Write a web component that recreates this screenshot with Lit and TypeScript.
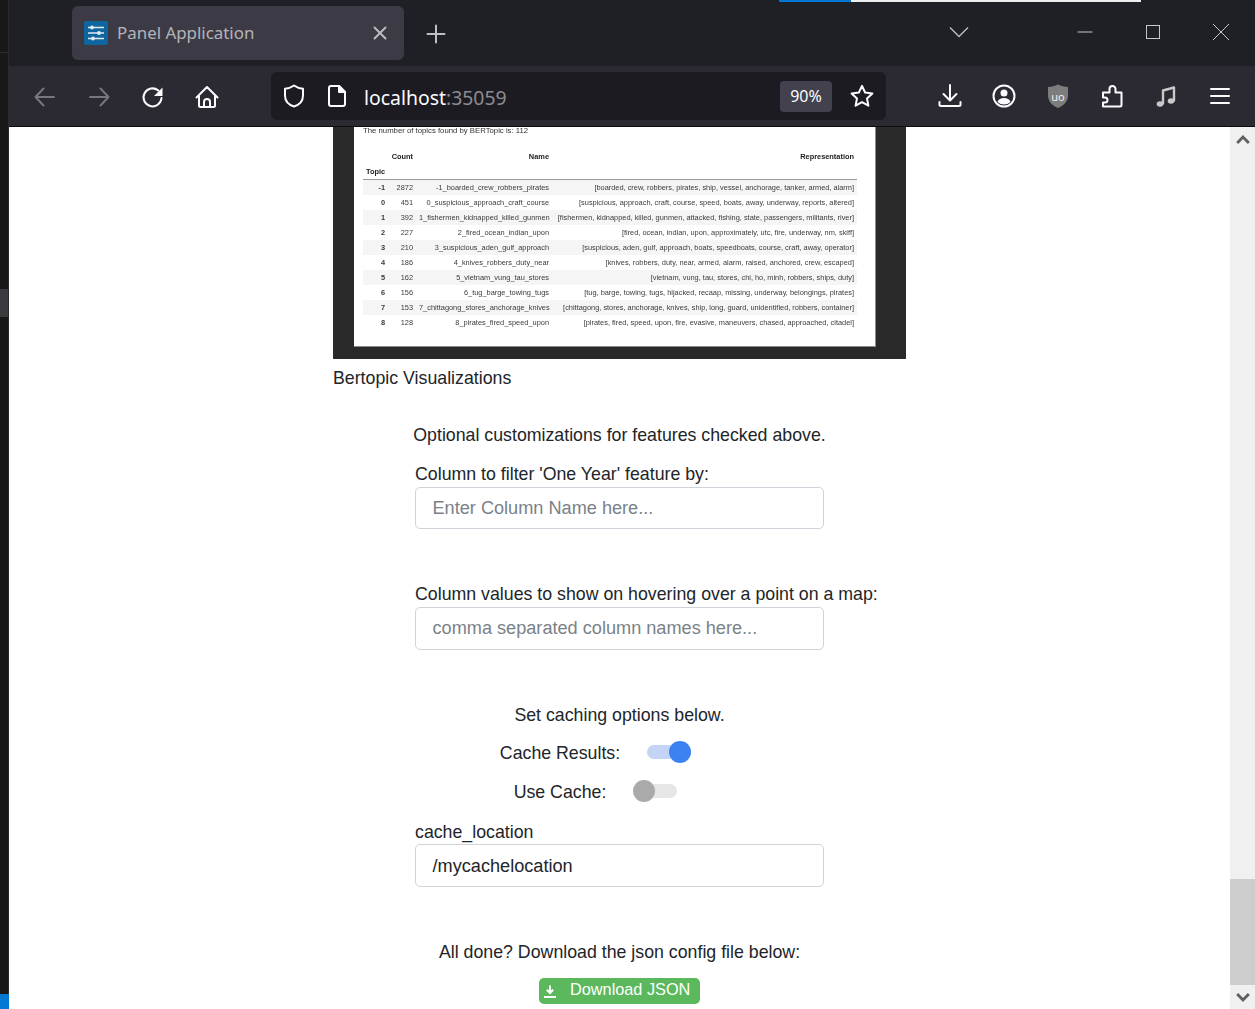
import { LitElement, html, css, svg } from 'lit';
import { customElement } from 'lit/decorators.js';

const rows = [
  ['-1', '2872', '-1_boarded_crew_robbers_pirates', '[boarded, crew, robbers, pirates, ship, vessel, anchorage, tanker, armed, alarm]'],
  ['0', '451', '0_suspicious_approach_craft_course', '[suspicious, approach, craft, course, speed, boats, away, underway, reports, altered]'],
  ['1', '392', '1_fishermen_kidnapped_killed_gunmen', '[fishermen, kidnapped, killed, gunmen, attacked, fishing, state, passengers, militants, river]'],
  ['2', '227', '2_fired_ocean_indian_upon', '[fired, ocean, indian, upon, approximately, utc, fire, underway, nm, skiff]'],
  ['3', '210', '3_suspicious_aden_gulf_approach', '[suspicious, aden, gulf, approach, boats, speedboats, course, craft, away, operator]'],
  ['4', '186', '4_knives_robbers_duty_near', '[knives, robbers, duty, near, armed, alarm, raised, anchored, crew, escaped]'],
  ['5', '162', '5_vietnam_vung_tau_stores', '[vietnam, vung, tau, stores, chi, ho, minh, robbers, ships, duty]'],
  ['6', '156', '6_tug_barge_towing_tugs', '[tug, barge, towing, tugs, hijacked, recaap, missing, underway, belongings, pirates]'],
  ['7', '153', '7_chittagong_stores_anchorage_knives', '[chittagong, stores, anchorage, knives, ship, long, guard, unidentified, robbers, container]'],
  ['8', '128', '8_pirates_fired_speed_upon', '[pirates, fired, speed, upon, fire, evasive, maneuvers, chased, approached, citadel]'],
];

const icon = (body: unknown, cls = '') =>
  html`<svg class="ico ${cls}" viewBox="0 0 24 24" width="24" height="24" fill="none" stroke="currentColor" stroke-width="2" stroke-linecap="round" stroke-linejoin="round">${body}</svg>`;

const icons = {
  back: svg`<path d="M21 12H3M10.500 3.500 2.500 12l8 8.500" />`,
  forward: svg`<path d="M3 12h18M13.500 3.500l8 8.500-8 8.500" />`,
  reload: svg`<path d="M20.500 13a9 9 0 1 1-3.200-7.500" /><path d="M21.500 2.500v8.500H13z" fill="currentColor" stroke="none" />`,
  home: svg`<path d="M1.500 12.500 12 2l10.500 10.500M4 10v10.500A1.500 1.500 0 0 0 5.500 22h13a1.500 1.500 0 0 0 1.500-1.500V10M9 22v-5a3 3 0 0 1 6 0v5" />`,
  shield: svg`<path d="M12 1.500c2.500 1.800 5.500 3 9 3.200v6.800c0 5.200-3.700 9.300-9 11-5.300-1.700-9-5.800-9-11V4.700c3.500-.2 6.500-1.400 9-3.200z" />`,
  page: svg`<path d="M4 4a2 2 0 0 1 2-2h8l6 6v12a2 2 0 0 1-2 2H6a2 2 0 0 1-2-2z" /><path d="M14 2v6h6z" fill="currentColor" />`,
  star: svg`<path d="M12 1.800l3.100 6.700 7.300.9-5.400 5 1.400 7.300-6.400-3.600-6.400 3.600 1.400-7.300-5.400-5 7.300-.9z" />`,
  download: svg`<path d="M12 1v15M5.500 10l6.500 6.500 6.500-6.500M1.500 18v2.500A1.500 1.500 0 0 0 3 22h18a1.500 1.500 0 0 0 1.500-1.500V18" />`,
  account: svg`<circle cx="12" cy="12" r="10.500" /><circle cx="12" cy="9" r="3.500" fill="currentColor" stroke="none" /><path d="M5.500 18c1-3 3.500-4 6.500-4s5.500 1 6.500 4a9.500 9.500 0 0 1-13 0z" fill="currentColor" stroke="none" />`,
  puzzle: svg`<path d="M3 22.500h17a1.500 1.500 0 0 0 1.500-1.500V8.500h-6V5a3 3 0 0 0-6 0v3.500H3v5h2a2.500 2.500 0 0 1 0 5H3z" />`,
  music: svg`<path d="M9 19.500V6.500L20 3.500v13" stroke-width="2.400" /><ellipse cx="6" cy="20" rx="3.300" ry="2.800" fill="currentColor" stroke="none" /><ellipse cx="17" cy="17" rx="3.300" ry="2.800" fill="currentColor" stroke="none" />`,
  menu: svg`<path d="M3 5h18M3 12h18M3 19h18" />`,
  plus: svg`<path d="M12 3.500v17M3.500 12h17" />`,
  close: svg`<path d="M6.500 6.500l11 11M17.500 6.500l-11 11" />`,
  chevron: svg`<path d="M3 7.500l9 9 9-9" />`,
  minimize: svg`<path d="M4.500 12h15" />`,
  maximize: svg`<rect x="5.500" y="5.500" width="13" height="13" />`,
  winclose: svg`<path d="M4 4l16 16M20 4 4 20" />`,
  up: svg`<path d="M5 15.500l7-7 7 7" />`,
  down: svg`<path d="M5 8.500l7 7 7-7" />`,
};

@customElement('app-root')
export class AppRoot extends LitElement {
  static override styles = css`
    :host {
      display: flex;
      height: 1009px;
      overflow: hidden;
      font-family: 'Liberation Sans', Arial, sans-serif;
      color: #212529;
    }
    .strip {
      width: 8px;
      flex: none;
      display: flex;
      flex-direction: column;
      background: #181818;
      border-right: 1px solid #2b2b2b;
    }
    .strip .top { height: 52px; border-bottom: 1px solid #2b2b2b; }
    .strip .gap { height: 236px; }
    .strip .patch { height: 28px; background: #3a3a3f; }
    .strip .blue { margin-top: auto; height: 15px; background: #0078d4; margin-right: -1px; }
    .main { flex: 1; display: flex; flex-direction: column; min-width: 0; }
    .ico { display: block; flex: none; }

    .tabbar {
      position: relative;
      height: 66px;
      flex: none;
      display: flex;
      background: #1f1f26;
      color: #c8c8cc;
      padding-left: 63px;
    }
    .progress {
      position: absolute;
      top: 0;
      left: 770px;
      width: 362px;
      height: 2px;
      background: linear-gradient(to right, #0078d4 72px, #eeeeee 72px);
    }
    .tab {
      width: 332px;
      height: 54px;
      margin-top: 6px;
      box-sizing: border-box;
      padding: 0 12px;
      display: flex;
      align-items: center;
      background: #3c3b45;
      border-radius: 6px;
    }
    .favicon {
      width: 24px;
      height: 24px;
      flex: none;
      background: #0f659e;
      border-radius: 2px;
      color: #dfe9f1;
    }
    .tab-title {
      margin-left: 9px;
      margin-bottom: 2px;
      flex: 1;
      font-family: 'Noto Sans', sans-serif;
      font-size: 16.900px;
      color: #b4b3b9;
      white-space: nowrap;
    }
    .tab .ico { color: #b9b9be; }
    .slot {
      width: 54px;
      height: 60px;
      flex: none;
      display: flex;
      align-items: center;
      justify-content: center;
    }
    .tabbar .slot { height: 64px; }
    .tabbar .plus { width: 64px; height: 68px; color: #c0c0c4; }
    .chev { margin-left: auto; margin-right: 65px; color: #b8b8bc; }
    .chev .ico { stroke-width: 1.500; stroke-linecap: butt; }
    .win { width: 68px; color: #c8c8cc; }
    .win .ico { stroke-width: 1; stroke-linecap: butt; stroke-linejoin: miter; }

    .toolbar {
      height: 60px;
      flex: none;
      box-sizing: border-box;
      display: flex;
      align-items: center;
      padding-left: 9px;
      background: #2b2a33;
      color: #fbfbfe;
    }
    .nav { padding-top: 2px; box-sizing: border-box; }
    .dim { color: #77767c; }
    .urlbar {
      width: 615px;
      height: 48px;
      margin: 0 37px;
      flex: none;
      box-sizing: border-box;
      padding: 0 12px 0 11px;
      display: flex;
      align-items: center;
      background: #1c1b22;
      border-radius: 6px;
    }
    .urlbar .page { margin-left: 19px; }
    .url {
      margin-left: 15px;
      flex: 1;
      font-family: 'Noto Sans', sans-serif;
      font-size: 19.400px;
      padding-top: 2px;
    }
    .url span { color: #8b8b90; }
    .zoom {
      width: 52px;
      height: 31px;
      display: flex;
      align-items: center;
      justify-content: center;
      background: #42414d;
      border-radius: 4px;
      font-family: 'Noto Sans', sans-serif;
      font-size: 16px;
    }
    .urlbar .star { margin-left: 18px; }
    .music { color: #c9c9c9; }
    .ublock { position: relative; width: 24px; height: 24px; }
    .ublock b {
      position: absolute;
      inset: 0;
      display: flex;
      align-items: center;
      justify-content: center;
      font: 400 11px 'Noto Sans', sans-serif;
      color: #eeeeee;
    }

    .rule { height: 1px; flex: none; background: #0c0c0d; }
    .viewport { height: 882px; flex: none; display: flex; background: #fff; overflow: hidden; }
    .content { flex: 1; min-width: 0; }

    .frame {
      width: 573px;
      margin: 0 auto;
      box-sizing: border-box;
      padding: 0 30px 12px 21px;
      background: #2a2a2a;
    }
    .panel {
      height: 220px;
      box-sizing: border-box;
      padding-left: 9px;
      background: #fff;
      border-right: 1px solid #8a8a8a;
      border-bottom: 1px solid #8a8a8a;
      filter: blur(0.3px);
      color: #333;
    }
    .panel p {
      margin: 0 0 14.500px;
      font-size: 7.760px;
      line-height: 7px;
    }
    table {
      width: 494px;
      table-layout: fixed;
      border-collapse: collapse;
      font-size: 7.400px;
    }
    th, td {
      box-sizing: border-box;
      height: 15px;
      padding: 0 3px;
      text-align: right;
      white-space: nowrap;
      overflow: hidden;
    }
    th { color: #222; }
    tbody th, tbody td { color: #3a3a3a; }
    thead tr:last-child th { height: 16px; text-align: left; border-bottom: 1.500px solid #999; }
    tbody tr:nth-child(odd) { background: #f5f5f5; }
    .c1 { width: 25px; }
    .c2 { width: 28px; }
    .c3 { width: 136px; }

    .form {
      width: 573px;
      margin: 0 auto;
      font-size: 17.750px;
      line-height: 22px;
    }
    .caption { margin-top: 8px; }
    .center { text-align: center; }
    .field { width: 409px; margin: 0 auto; white-space: nowrap; }
    .input {
      height: 42px;
      box-sizing: border-box;
      padding: 0 16.500px;
      display: flex;
      align-items: center;
      border: 1px solid #ced4da;
      border-radius: 5px;
      color: #7a8288;
      font-size: 18.150px;
      margin-top: 2px;
    }
    .input.tall { height: 43px; padding-bottom: 1px; }
    .input.filled { color: #212529; margin-top: 1px; padding-bottom: 0; }
    .switch-row {
      display: flex;
      justify-content: center;
      align-items: center;
      gap: 27px;
      padding-right: 47px;
      height: 22px;
    }
    .switch { position: relative; width: 45px; height: 22px; flex: none; margin-bottom: 2px; }
    .switch i {
      position: absolute;
      left: 0;
      right: 1px;
      top: 4px;
      height: 14px;
      border-radius: 7px;
      background: #e6e6e6;
    }
    .switch u {
      position: absolute;
      left: 0;
      top: 0;
      width: 22px;
      height: 22px;
      border-radius: 50%;
      background: #aaaaaa;
    }
    .switch.on i { background: #c3d4f6; }
    .switch.on u { left: 22px; background: #3b82f0; }
    .mt16 { margin-top: 16px; }
    .mt17 { margin-top: 17px; }
    .mt18 { margin-top: 18px; }
    .mt35 { margin-top: 35px; }
    .mt54 { margin-top: 54px; }
    .btn-wrap { display: flex; justify-content: center; margin-top: 15px; }
    .btn {
      width: 161px;
      height: 26px;
      box-sizing: border-box;
      padding-left: 3px;
      display: flex;
      align-items: center;
      gap: 12px;
      background: #5cb85c;
      border-radius: 5px;
      color: #fff;
      font-size: 16.300px;
    }
    .btn span { padding-bottom: 5px; }

    .scrollbar {
      width: 25px;
      flex: none;
      display: flex;
      flex-direction: column;
      background: #f0f0f0;
      color: #606060;
    }
    .arrow { height: 25px; flex: none; display: flex; align-items: center; justify-content: center; }
    .arrow .ico { stroke-width: 3.500; width: 20px; height: 20px; stroke-linecap: butt; stroke-linejoin: miter; }
    .thumb { margin-top: auto; height: 106px; flex: none; background: #cdcdcd; }
    .arrow.bottom { height: 24px; }
  `;

  override render() {
    return html`
      <div class="strip">
        <div class="top"></div>
        <div class="gap"></div>
        <div class="patch"></div>
        <div class="blue"></div>
      </div>
      <div class="main">
        <div class="tabbar">
          <div class="progress"></div>
          <div class="tab">
            <div class="favicon">
              <svg viewBox="0 0 24 24" width="24" height="24" fill="none" stroke="currentColor" stroke-width="1.500">
                <path d="M4 6.500h16M4 12h16M4 17.500h16" />
                <circle cx="8" cy="6.500" r="1.200" fill="currentColor" />
                <circle cx="15" cy="12" r="1.200" fill="currentColor" />
                <circle cx="9" cy="17.500" r="1.200" fill="currentColor" />
              </svg>
            </div>
            <span class="tab-title">Panel Application</span>
            ${icon(icons.close)}
          </div>
          <div class="slot plus">${icon(icons.plus)}</div>
          <div class="slot chev">${icon(icons.chevron)}</div>
          <div class="slot win">${icon(icons.minimize)}</div>
          <div class="slot win">${icon(icons.maximize)}</div>
          <div class="slot win">${icon(icons.winclose)}</div>
        </div>

        <div class="toolbar">
          <div class="slot nav dim">${icon(icons.back)}</div>
          <div class="slot nav dim">${icon(icons.forward)}</div>
          <div class="slot nav">${icon(icons.reload)}</div>
          <div class="slot nav">${icon(icons.home)}</div>
          <div class="urlbar">
            ${icon(icons.shield)}
            ${icon(icons.page, 'page')}
            <div class="url">localhost<span>:35059</span></div>
            <div class="zoom">90%</div>
            ${icon(icons.star, 'star')}
          </div>
          <div class="slot">${icon(icons.download)}</div>
          <div class="slot">${icon(icons.account)}</div>
          <div class="slot">
            <div class="ublock">
              <svg class="ico" viewBox="0 0 24 24" width="24" height="24">
                <path d="M12 0.500c3 1.500 6.500 2.300 10 2.500v8.500c0 5.500-4 10-10 12.500-6-2.500-10-7-10-12.500V3c3.500-.2 7-1 10-2.500z" fill="#7d7d7d" />
              </svg>
              <b>uo</b>
            </div>
          </div>
          <div class="slot">${icon(icons.puzzle)}</div>
          <div class="slot music">${icon(icons.music)}</div>
          <div class="slot">${icon(icons.menu)}</div>
        </div>
        <div class="rule"></div>

        <div class="viewport">
          <div class="content">
            <div class="frame">
              <div class="panel">
                <p>The number of topics found by BERTopic is: 112</p>
                <table>
                  <thead>
                    <tr>
                      <th class="c1"></th>
                      <th class="c2">Count</th>
                      <th class="c3">Name</th>
                      <th>Representation</th>
                    </tr>
                    <tr><th>Topic</th><th></th><th></th><th></th></tr>
                  </thead>
                  <tbody>
                    ${rows.map(
                      (r) => html`<tr><th>${r[0]}</th><td>${r[1]}</td><td>${r[2]}</td><td>${r[3]}</td></tr>`
                    )}
                  </tbody>
                </table>
              </div>
            </div>

            <div class="form">
              <div class="caption">Bertopic Visualizations</div>
              <div class="center mt35">Optional customizations for features checked above.</div>
              <div class="field mt17">
                <div>Column to filter 'One Year' feature by:</div>
                <div class="input">Enter Column Name here...</div>
              </div>
              <div class="field mt54">
                <div>Column values to show on hovering over a point on a map:</div>
                <div class="input tall">comma separated column names here...</div>
              </div>
              <div class="center mt54">Set caching options below.</div>
              <div class="switch-row mt16">
                <span>Cache Results:</span>
                <div class="switch on"><i></i><u></u></div>
              </div>
              <div class="switch-row mt17">
                <span>Use Cache:</span>
                <div class="switch"><i></i><u></u></div>
              </div>
              <div class="field mt18">
                <div>cache_location</div>
                <div class="input tall filled">/mycachelocation</div>
              </div>
              <div class="center mt54">All done? Download the json config file below:</div>
              <div class="btn-wrap">
                <div class="btn">
                  <svg class="ico" viewBox="0 0 16 16" width="16" height="16" fill="none" stroke="#fff" stroke-width="2">
                    <path d="M8 2.500v7M4.800 6.800 8 10l3.200-3.200M2 14h12" />
                  </svg>
                  <span>Download JSON</span>
                </div>
              </div>
            </div>
          </div>

          <div class="scrollbar">
            <div class="arrow">${icon(icons.up)}</div>
            <div class="thumb"></div>
            <div class="arrow bottom">${icon(icons.down)}</div>
          </div>
        </div>
      </div>
    `;
  }
}
